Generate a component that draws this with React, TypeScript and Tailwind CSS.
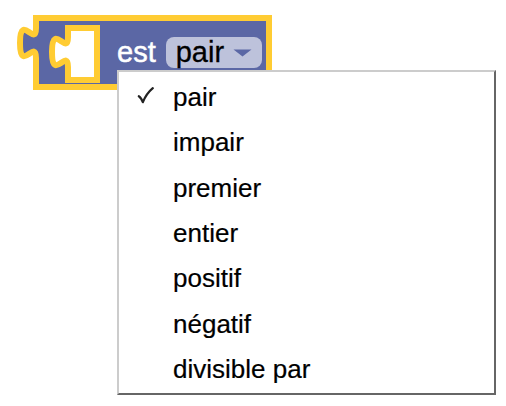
const OPTIONS = ['pair', 'impair', 'premier', 'entier', 'positif', 'négatif', 'divisible par'];

function Slot() {
  // empty inline input (hole in the block) with its puzzle notch
  return (
    <svg width="58" height="64" viewBox="0 0 58 64" className="shrink-0">
      <path
        d="M22,6 H51 V58 H22 V45 C22,25 6,61 6,30 C6,-1 22,35 22,15 Z"
        fill="#fff"
        stroke="#fc3"
        strokeWidth={6}
      />
    </svg>
  );
}

function Block() {
  return (
    <div className="relative h-[95px] w-[280px]">
      <svg width="280" height="95" viewBox="0 0 280 95" className="absolute inset-0">
        <path
          d="M36,18 H269 V87 H36 V58 C36,38 20,74 20,43 C20,12 36,48 36,28 Z"
          fill="#5b67a5"
          stroke="#fc3"
          strokeWidth={6}
        />
      </svg>

      <div className="relative flex items-start pl-[46px] pt-[22px]">
        <Slot />
        <span className="ml-[13px] mt-[15px] h-[31px] text-[29px] leading-[31px] text-white [-webkit-text-stroke:0.5px_#fff]">
          est
        </span>
        <div className="ml-[10px] mt-[15px] flex h-[31px] items-center rounded-[8px] bg-[#bdc2db] pl-[10px] pr-[10px]">
          <span className="text-[29px] leading-[31px] text-black [-webkit-text-stroke:0.3px_#000]">pair</span>
          <svg width="19" height="8" viewBox="0 0 19 8" className="ml-[9px]">
            <path d="M0.5,0.5 H18.5 L9.5,7.5 Z" fill="#5b67a5" />
          </svg>
        </div>
      </div>
    </div>
  );
}

function Check() {
  return (
    <svg width="17" height="17" viewBox="0 0 17 17" className="mb-[4px]">
      <path
        d="M1.8,9.2 Q4.2,10.6 5.8,15.2 Q9.5,6.5 15.8,1.2"
        fill="none"
        stroke="#222"
        strokeWidth={2.2}
        strokeLinecap="round"
        strokeLinejoin="round"
      />
    </svg>
  );
}

export default function App() {
  const selected = 'pair';

  return (
    <div className="relative h-[406px] w-[506px] overflow-hidden bg-white font-['Liberation_Sans',sans-serif]">
      <Block />

      {/* dropdown menu opened from the field */}
      <div className="absolute left-[117px] top-[70px] w-[379px] border-2 border-t-[#ccc] border-l-[#ccc] border-r-[#666] border-b-[#666] bg-white pb-[1px] pt-[3px]">
        {OPTIONS.map((opt) => (
          <div key={opt} className="flex h-[45.33px] items-center">
            <div className="flex w-[54px] items-center pl-[18px]">{opt === selected && <Check />}</div>
            <span className="text-[26px] leading-[45px] text-black [-webkit-text-stroke:0.2px_#000]">{opt}</span>
          </div>
        ))}
      </div>
    </div>
  );
}
